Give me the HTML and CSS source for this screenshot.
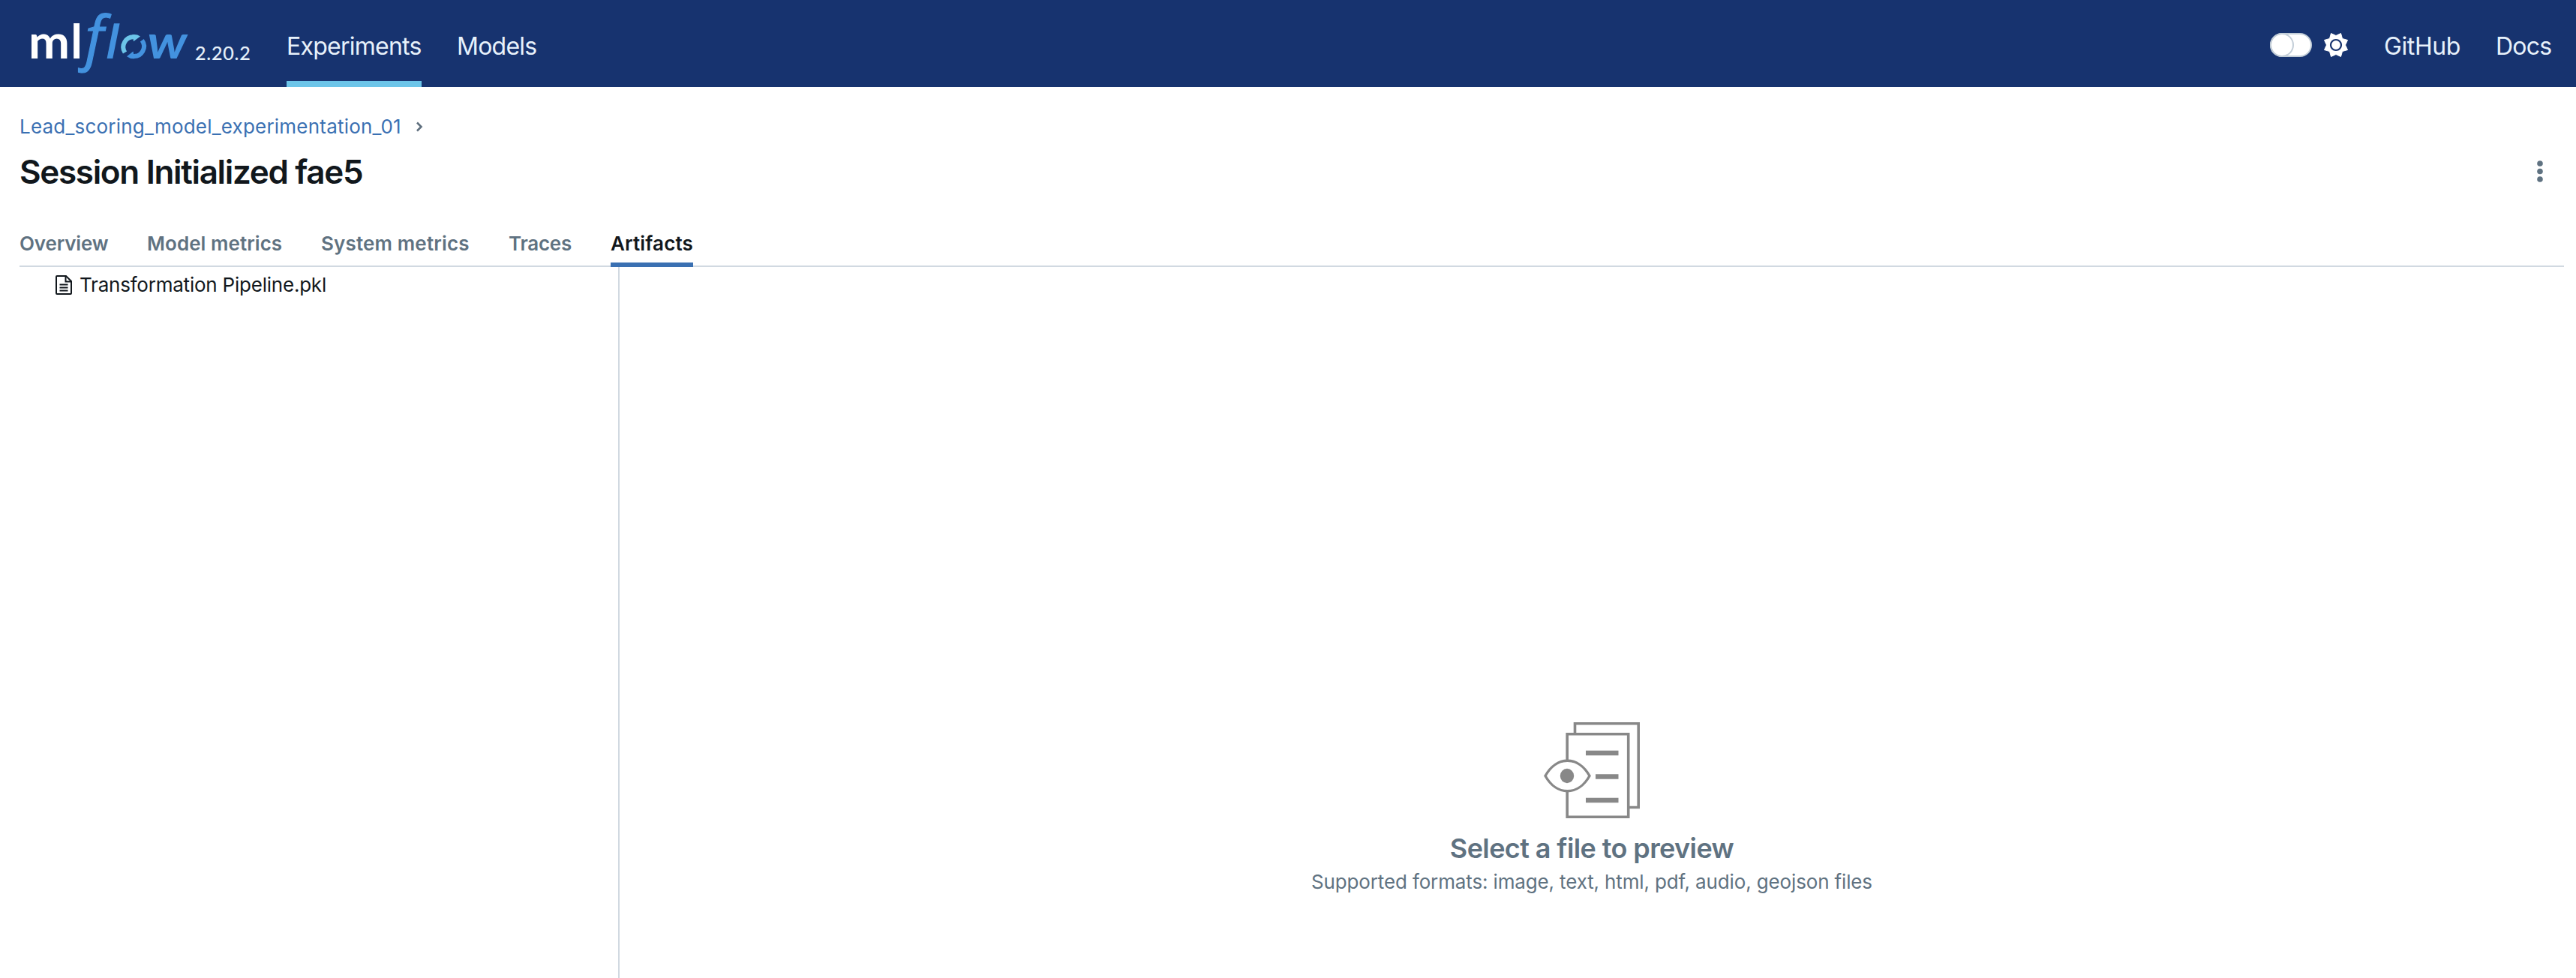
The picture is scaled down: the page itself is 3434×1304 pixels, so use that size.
FILE: index.html
```
<!DOCTYPE html>
<html lang="en">
<head>
<meta charset="utf-8">
<title>Session Initialized fae5 - MLflow</title>
<link rel="stylesheet" href="styles.css">
</head>
<body>
<header class="header">
  <a class="brand">
    <svg class="logo" width="212" height="88" viewBox="40 12 212 88">
      <text class="logo-ml" x="38" y="78" textLength="55" lengthAdjust="spacingAndGlyphs">m</text>
      <text class="logo-ml" x="94.200" y="78">l</text>
      <text class="logo-f" x="113.500" y="78">f</text>
      <text class="logo-flow" transform="translate(141.300 78) skewX(-4.500)">l</text>
      <path d="M166.5 69.5A13.5 13.5 0 0 1 179 48.8" transform="translate(0 .5)" fill="none" stroke="#6cc5e9" stroke-width="6"/>
      <path d="M176.5 46.2Q182 45.2 187 48.4L178 55.2L177.6 51.6L174 52.5Z" fill="#6cc5e9"/>
      <path d="M189.3 53.8A13.3 13.3 0 0 1 177.5 75" fill="none" stroke="#4392df" stroke-width="6"/>
      <path d="M179 78.2Q173.500 78.600 169 75.200L177.500 68.500L178.200 72.300L181 71.800Z" fill="#4392df"/>
      <text class="logo-flow" x="196.500" y="78" textLength="53" lengthAdjust="spacingAndGlyphs">w</text>
    </svg>
    <span class="version">2.20.2</span>
  </a>
  <nav class="nav">
    <a class="nav-link nav-active experiments">Experiments</a>
    <a class="nav-link models">Models</a>
  </nav>
  <div class="header-right">
    <span class="switch"><span class="switch-knob"></span></span>
    <svg class="sun" width="34" height="34" viewBox="-17 -17 34 34">
      <path d="M-6.500-15.500L0-12.500L6.500-15.500L8.500-8.500L15.500-6.500L12.500 0L15.500 6.500L8.500 8.500L6.500 15.500L0 12.500L-6.500 15.500L-8.500 8.500L-15.500 6.500L-12.500 0L-15.500-6.500L-8.500-8.500Z" fill="#fff" stroke="#fff" stroke-linejoin="round"/>
      <circle r="7" fill="#fff" stroke="#17336f" stroke-width="2.200"/>
    </svg>
    <a class="nav-link github">GitHub</a>
    <a class="nav-link docs">Docs</a>
  </div>
</header>
<main class="main">
  <div class="breadcrumb">
    <a class="crumb">Lead_scoring_model_experimentation_01</a>
    <svg width="12" height="16" viewBox="0 0 12 16"><path d="M3 2.500L8.500 8L3 13.500" fill="none" stroke="#5f6f7e" stroke-width="2.600"/></svg>
  </div>
  <div class="title-row">
    <h1 class="title">Session Initialized fae5</h1>
    <svg width="12" height="34" viewBox="0 0 12 34" fill="#5f7281"><circle cx="6" cy="6" r="3.800"/><circle cx="6" cy="16.500" r="3.800"/><circle cx="6" cy="27" r="3.800"/></svg>
  </div>
  <div class="tabs">
    <a class="tab t-overview">Overview</a>
    <a class="tab t-model">Model metrics</a>
    <a class="tab t-system">System metrics</a>
    <a class="tab t-traces">Traces</a>
    <a class="tab tab-active t-artifacts">Artifacts</a>
  </div>
  <div class="artifacts">
    <aside class="tree">
      <div class="file">
        <svg width="22" height="26" viewBox="0 0 22 26" fill="none" stroke="#11171c" stroke-width="2"><path d="M2 1H14L21 8V24Q21 25 20 25H2Q1 25 1 24V2Q1 1 2 1Z"/><path d="M13.500 1V8.500H21M5.500 12.500H16.500M5.500 16.500H16.500M5.500 20.500H16.500"/></svg>
        <span class="file-name">Transformation Pipeline.pkl</span>
      </div>
    </aside>
    <section class="preview">
      <svg width="128" height="128" viewBox="0 0 128 128" fill="none" stroke="#888" stroke-width="3.600">
        <path d="M41.500 15V1.800H126.200V113.500H114"/>
        <path d="M31.200 50V15.800H112.700V126.200H31.200V92"/>
        <path d="M2 71.500C17 44.500 46 44.500 61 71.500C46 98.500 17 98.500 2 71.500Z" stroke-width="3.400"/>
        <ellipse cx="31" cy="71.500" rx="9.200" ry="9.700" fill="#888" stroke="none"/>
        <path d="M56 41H99.500M69 72.500H99.500M56 104H99.500" stroke-width="6.400"/>
      </svg>
      <h2 class="preview-title">Select a file to preview</h2>
      <p class="preview-text">Supported formats: image, text, html, pdf, audio, geojson files</p>
    </section>
  </div>
</main>
</body>
</html>
```
FILE: styles.css
```
* { box-sizing: border-box; }
body {
  margin: 0;
  height: 1304px;
  overflow: hidden;
  display: flex;
  flex-direction: column;
  background: #fff;
  color: #11171c;
  font: 26px/40px Inter, "Liberation Sans", sans-serif;
}
h1, h2, p { margin: 0; }
a, span { white-space: nowrap; }

.header {
  display: flex;
  flex: none;
  height: 116px;
  padding: 0 31px 0 40px;
  background: #17336f;
  color: #e7f1fb;
}
.brand { display: flex; width: 342px; padding-top: 12px; }
.logo { flex: none; overflow: visible; }
.logo-ml { font: 700 63px Lato, sans-serif; fill: #fff; }
.logo-flow { font: italic 700 63px Lato, sans-serif; fill: #4392df; }
.logo-f { font: italic 500 79px "Open Sans", sans-serif; fill: #4392df; stroke: #4392df; stroke-width: 1.2px; }
.version {
  margin: 38px 0 0 8px;
  font: 25px/40px Lato, sans-serif;
  letter-spacing: 0.8px;
  -webkit-text-stroke: 0.2px;
}
.nav { display: flex; gap: 47px; }
.nav-link {
  display: flex;
  align-items: center;
  height: 116px;
  padding-top: 7px;
  font-size: 32px;
}
.nav-active { width: 180px; box-shadow: inset 0 -8px #6cc5e9; }
.experiments { letter-spacing: -0.75px; }
.models { letter-spacing: -0.75px; }
.github { width: 104px; margin-left: 47px; letter-spacing: -0.4px; }
.docs { width: 76px; margin-left: 45px; letter-spacing: -0.8px; }
.header-right { display: flex; align-items: center; margin-left: auto; }
.switch {
  width: 56px;
  height: 32px;
  margin-top: 4px;
  border: 2px solid #c3ced8;
  border-radius: 16px;
  background: #fff;
}
.switch-knob {
  display: block;
  width: 32px;
  height: 32px;
  margin: -2px;
  border: 2px solid #c3ced8;
  border-radius: 50%;
}
.sun { margin: 4px 0 0 15px; }

.main {
  display: flex;
  flex: 1;
  flex-direction: column;
  min-height: 0;
  padding: 33px 16px 0 26px;
}
.breadcrumb { display: flex; align-items: center; gap: 17px; height: 40px; }
.crumb { width: 510px; color: #3a70b2; letter-spacing: 0.21px; }
.title-row {
  display: flex;
  justify-content: space-between;
  align-items: center;
  height: 56px;
  margin-top: 12px;
  padding-right: 26px;
}
.title { font-size: 44px; font-weight: 600; line-height: 56px; letter-spacing: -1.33px; }
.tabs {
  display: flex;
  flex: none;
  gap: 52px;
  height: 51px;
  margin-top: 48px;
  box-shadow: inset 0 -2px #d1d9e1;
}
.tab { height: 51px; color: #5f7281; font-weight: 600; }
.tab-active { color: #11171c; box-shadow: inset 0 -6px #3a70b2; }
.t-overview { width: 118px; letter-spacing: -0.15px; }
.t-model { width: 180px; letter-spacing: 0.05px; }
.t-system { width: 198px; letter-spacing: 0.15px; }
.t-traces { width: 84px; letter-spacing: -0.25px; }
.t-artifacts { width: 110px; letter-spacing: 0.15px; }

.artifacts { display: flex; flex: 1; min-height: 0; }
.tree { width: 800px; padding: 4px 0 0 48px; border-right: 2px solid #d1d9e1; }
.file { display: flex; align-items: center; gap: 10px; }
.file-name { letter-spacing: -0.22px; }
.preview {
  display: flex;
  flex: 1;
  flex-direction: column;
  align-items: center;
  padding-top: 607px;
  color: #5f7281;
}
.preview svg { flex: none; }
.preview-title {
  margin-top: 18px;
  font-size: 36px;
  font-weight: 600;
  line-height: 44px;
  letter-spacing: -0.6px;
}
.preview-text { margin-top: 3px; letter-spacing: -0.14px; }
```
